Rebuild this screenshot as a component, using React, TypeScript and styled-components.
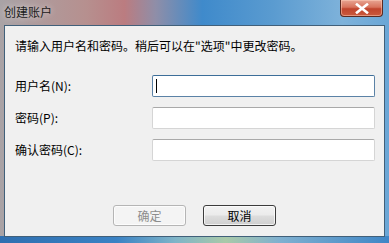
import React from "react";
import styled, { createGlobalStyle } from "styled-components";

const GlobalStyle = createGlobalStyle`
  html, body {
    margin: 0;
    padding: 0;
    overflow: hidden;
  }
  body {
    font-family: "Noto Sans CJK SC", "Liberation Sans", sans-serif;
    font-size: 12px;
    color: #000;
  }
`;

const fields = [
  { label: "用户名(N):", focused: true },
  { label: "密码(P):", focused: false },
  { label: "确认密码(C):", focused: false },
];

export default function App() {
  return (
    <Window>
      <GlobalStyle />
      <TitleBar>
        <Title>创建账户</Title>
        <CloseButton>
          <svg width="14" height="11" viewBox="0 0 14 11">
            <path
              d="M2 1.5 L12 9.5 M12 1.5 L2 9.5"
              stroke="#fff"
              strokeWidth="2.6"
              strokeLinecap="square"
            />
          </svg>
        </CloseButton>
      </TitleBar>
      <Client>
        <Intro>请输入用户名和密码。稍后可以在"选项"中更改密码。</Intro>
        <Form>
          {fields.map((f) => (
            <Row key={f.label}>
              <Label>{f.label}</Label>
              <Field focused={f.focused}>{f.focused && <Caret />}</Field>
            </Row>
          ))}
        </Form>
        <Buttons>
          <Button disabled>确定</Button>
          <Button primary>取消</Button>
        </Buttons>
      </Client>
    </Window>
  );
}

const Window = styled.div`
  width: 389px;
  height: 243px;
  display: flex;
  flex-direction: column;
  background:
    linear-gradient(
        90deg,
        #2f6fb0 0%,
        #3a82c4 30%,
        #7fb4c8 45%,
        #a9c9a8 58%,
        #7fb0d0 72%,
        #3f86c6 100%
      )
      bottom / 100% 7px no-repeat,
    linear-gradient(
      90deg,
      #a9a3a6 0%,
      #b6908f 22%,
      #bb7c80 32%,
      #8f8ea8 40%,
      #3f8acb 52%,
      #5a9bd0 70%,
      #7eb2da 88%,
      #6aa6d6 100%
    );
  overflow: hidden;
`;

const TitleBar = styled.div`
  height: 25px;
  display: flex;
  align-items: flex-start;
  justify-content: space-between;
  padding: 0 6px 0 4px;
`;

const Title = styled.div`
  margin-top: 4px;
  font-size: 12px;
  line-height: 16px;
  color: #1a1a1a;
  text-shadow: 0 0 6px rgba(255, 255, 255, 0.7);
`;

const CloseButton = styled.div`
  width: 43px;
  height: 17px;
  box-sizing: border-box;
  display: flex;
  align-items: center;
  justify-content: center;
  border: 1px solid #5a2a22;
  border-top: none;
  border-radius: 0 0 4px 4px;
  background: linear-gradient(
    180deg,
    #e8a593 0%,
    #d8735c 45%,
    #c0442c 55%,
    #c95a3e 100%
  );
  box-shadow: inset 0 0 0 1px rgba(255, 210, 190, 0.5);
`;

const Client = styled.div`
  flex: 1;
  margin: 0 4px 6px 4px;
  background: #f0f0f0;
  border: 1px solid #41607a;
  display: flex;
  flex-direction: column;
  padding: 12px 9px 10px 10px;
`;

const Intro = styled.div`
  line-height: 16px;
  height: 16px;
`;

const Form = styled.div`
  display: flex;
  flex-direction: column;
  gap: 10px;
  margin-top: 21px;
`;

const Row = styled.div`
  display: flex;
  align-items: center;
`;

const Label = styled.div`
  width: 137px;
  line-height: 16px;
`;

const Field = styled.div<{ focused: boolean }>`
  width: 223px;
  height: 22px;
  box-sizing: border-box;
  background: #fff;
  border: 1px solid ${(p) => (p.focused ? "#5b82a6" : "#d5d5d5")};
  border-top-color: ${(p) => (p.focused ? "#3d6e99" : "#a9a9a9")};
  border-radius: 2px;
  display: flex;
  align-items: center;
  padding-left: 3px;
`;

const Caret = styled.div`
  width: 1px;
  height: 14px;
  background: #000;
`;

const Buttons = styled.div`
  margin-top: auto;
  display: flex;
  gap: 17px;
  padding-left: 98px;
`;

const Button = styled.button<{ primary?: boolean }>`
  width: 73px;
  height: 21px;
  box-sizing: border-box;
  padding: 0;
  font-family: inherit;
  font-size: 12px;
  color: ${(p) => (p.disabled ? "#8d8d8d" : "#000")};
  border: 1px solid ${(p) => (p.primary ? "#3c3c3c" : "#b5b5b5")};
  border-radius: 3px;
  background: ${(p) =>
    p.disabled
      ? "#f4f4f4"
      : "linear-gradient(180deg, #f2f2f2 0%, #ebebeb 48%, #dddddd 52%, #cfcfcf 100%)"};
  box-shadow: inset 0 0 0 1px rgba(255, 255, 255, 0.7);
`;
